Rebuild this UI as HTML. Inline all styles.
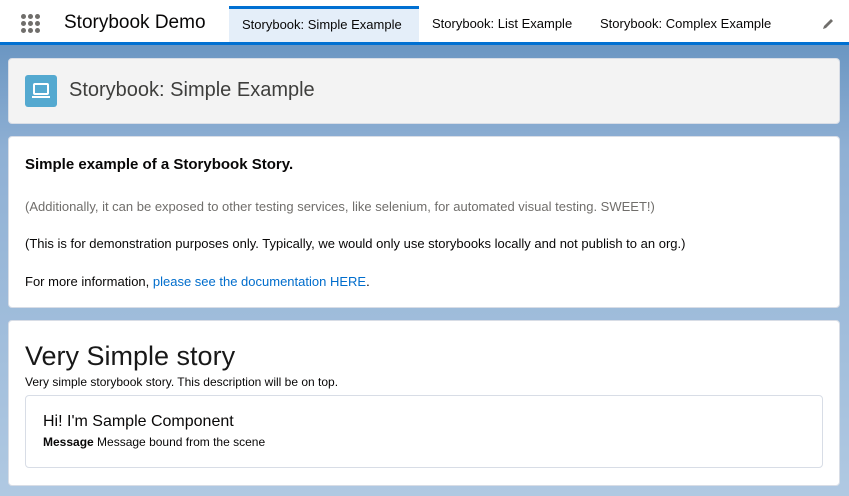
<!DOCTYPE html>
<html><head><style>
*{box-sizing:border-box;margin:0;padding:0}
body{width:849px;height:496px;overflow:hidden;font-family:"Liberation Sans",sans-serif;color:#080707;background:linear-gradient(#6b96c2 45px,#8fb0d4 150px,#b0c9e2 496px);position:relative}
.hdr{position:absolute;left:0;top:0;width:849px;background:#fff;border-bottom:3px solid #0070d2;height:45px}
.dots{position:absolute;left:21px;top:14px;width:20px;height:20px}
.dots i{position:absolute;width:5px;height:5px;border-radius:50%;background:#706e6b}
.app{position:absolute;left:64px;top:12px;font-size:19px}
.tab{position:absolute;top:6px;height:36px;font-size:13px;line-height:36px}
.act{left:229px;width:190px;background:#e4eef9;border-top:3px solid #0070d2;line-height:31px;padding-left:13px}
.card{position:absolute;left:8px;width:832px;border:1px solid #d8dde6;border-radius:4px;background:#fff}
.t{position:absolute;font-size:13px;white-space:nowrap}
</style></head><body>
<div class="hdr">
<div class="dots">
<i style="left:0;top:0"></i><i style="left:7px;top:0"></i><i style="left:14px;top:0"></i>
<i style="left:0;top:7px"></i><i style="left:7px;top:7px"></i><i style="left:14px;top:7px"></i>
<i style="left:0;top:14px"></i><i style="left:7px;top:14px"></i><i style="left:14px;top:14px"></i>
</div>
<div class="app">Storybook Demo</div>
<div class="tab act">Storybook: Simple Example</div>
<div class="tab" style="left:432px">Storybook: List Example</div>
<div class="tab" style="left:600px">Storybook: Complex Example</div>
<svg style="position:absolute;left:821px;top:17px" width="14" height="14" viewBox="0 0 14 14"><path d="M2 12l1-3 7-7 2 2-7 7z" fill="#706e6b"/></svg>
</div>
<div class="card" style="top:58px;height:66px;background:#f3f3f3">
<div style="position:absolute;left:16px;top:16px;width:32px;height:32px;background:#54a9d0;border-radius:3px">
<svg width="32" height="32" viewBox="0 0 32 32"><rect x="9" y="9" width="14" height="10" rx="1" fill="none" stroke="#fff" stroke-width="2"/><rect x="7" y="21" width="18" height="2" fill="#fff"/></svg></div>
<div class="t" style="left:60px;top:20px;font-size:20px;color:#3e3e3c">Storybook: Simple Example</div>
</div>
<div class="card" style="top:136px;height:172px">
<div class="t" style="left:16px;top:19px;font-size:15px;font-weight:bold">Simple example of a Storybook Story.</div>
<div class="t" style="left:16px;top:62px;color:#706e6b">(Additionally, it can be exposed to other testing services, like selenium, for automated visual testing. SWEET!)</div>
<div class="t" style="left:16px;top:99px">(This is for demonstration purposes only. Typically, we would only use storybooks locally and not publish to an org.)</div>
<div class="t" style="left:16px;top:137px">For more information, <span style="color:#006dcc">please see the documentation HERE</span>.</div>
</div>
<div class="card" style="top:320px;height:166px">
<div class="t" style="left:16px;top:20px;font-size:27px;color:#181818">Very Simple story</div>
<div class="t" style="left:16px;top:54px;font-size:12px">Very simple storybook story. This description will be on top.</div>
<div style="position:absolute;left:16px;top:74px;width:798px;height:73px;border:1px solid #d8dde6;border-radius:4px">
<div class="t" style="left:17px;top:17px;font-size:16px">Hi! I'm Sample Component</div>
<div class="t" style="left:17px;top:39px;font-size:12px"><b>Message</b> Message bound from the scene</div>
</div>
</div>
</body></html>
